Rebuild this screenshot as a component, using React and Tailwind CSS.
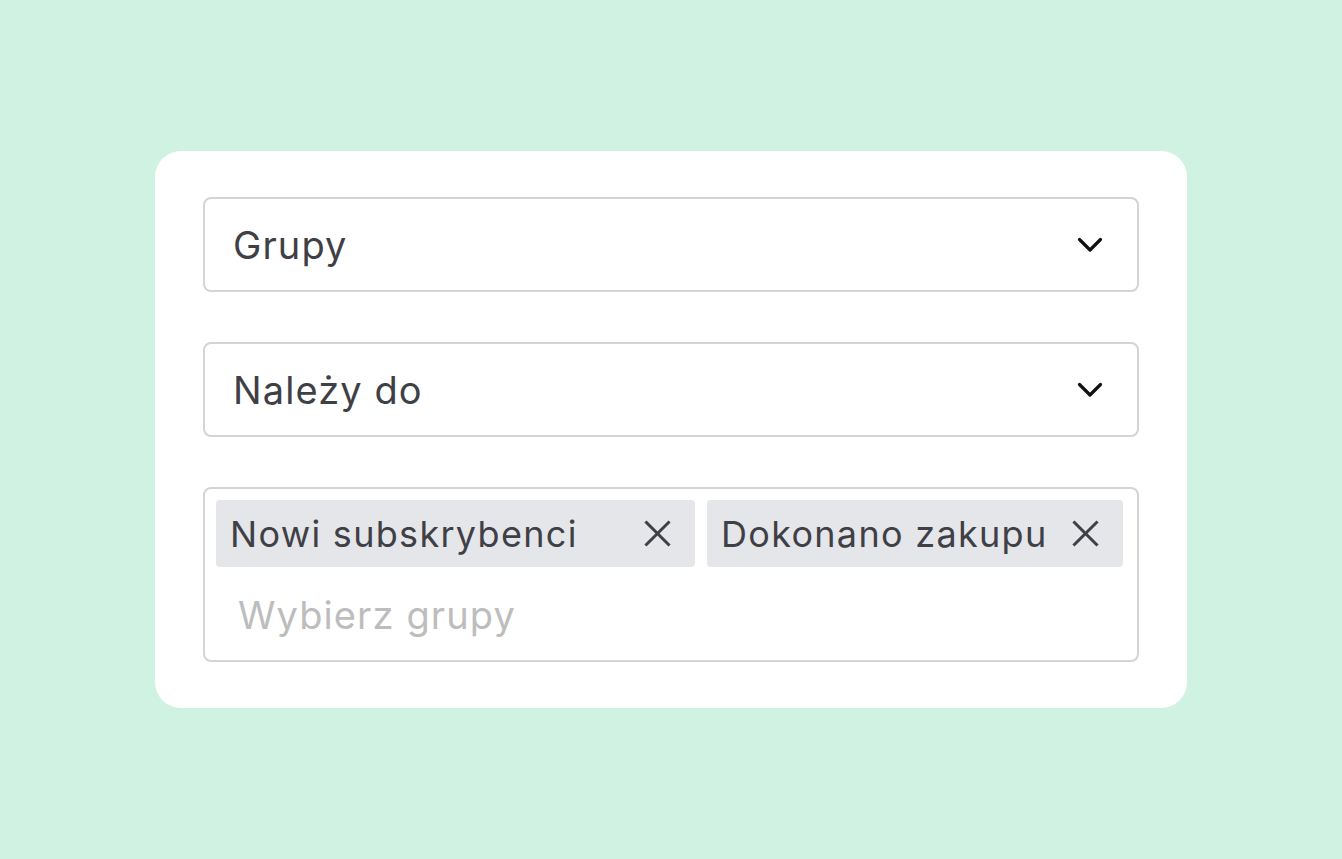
import React from 'react';

const Chevron = () => (
  <svg width="26" height="16" viewBox="0 0 26 16" fill="none" stroke="#111111" strokeWidth={3.2} strokeLinecap="round" strokeLinejoin="round">
    <path d="M2.5 2.5l10.5 10.5L23.5 2.5" />
  </svg>
);

const Close = () => (
  <svg width="27" height="27" viewBox="0 0 27 27" fill="none" stroke="#3f3f46" strokeWidth={3} strokeLinecap="square">
    <path d="M2.5 2.5l22 22M24.5 2.5l-22 22" />
  </svg>
);

const Select = ({ label }) => (
  <div className="h-[95px] flex items-center justify-between pl-[28px] pr-[34px] border-2 border-[#d4d4d8] rounded-[8px]">
    <span className="text-[38px] tracking-[1.1px] text-[#3f3f46] leading-none">{label}</span>
    <Chevron />
  </div>
);

const Chip = ({ label, width }) => (
  <div
    className={`h-[67px] flex items-center justify-between bg-[#e5e6ea] rounded-[4px] pl-[14px] pr-[24px] ${width}`}
  >
    <span className="text-[36px] tracking-[1.3px] text-[#3f3f46] leading-none">{label}</span>
    <Close />
  </div>
);

export default function App() {
  return (
    <div
      className="w-[1342px] h-[859px] bg-[#cff2e2] pt-[151px] pl-[155px]"
      style={{ fontFamily: 'Inter, "Noto Sans", sans-serif' }}
    >
      <div className="w-[1032px] h-[557px] bg-white rounded-[26px] px-[48px] pt-[46px] flex flex-col gap-[50px]">
        <Select label="Grupy" />
        <Select label="Należy do" />
        <div className="h-[175px] border-2 border-[#d4d4d8] rounded-[8px] pt-[11px] pl-[11px]">
          <div className="flex gap-[12px]">
            <Chip label="Nowi subskrybenci" width="w-[479px]" />
            <Chip label="Dokonano zakupu" width="w-[416px]" />
          </div>
          <div className="h-[67px] mt-[14px] flex items-center pl-[22px]">
            <span className="text-[38px] tracking-[1.1px] text-[#bdbdbd] leading-none">Wybierz grupy</span>
          </div>
        </div>
      </div>
    </div>
  );
}
